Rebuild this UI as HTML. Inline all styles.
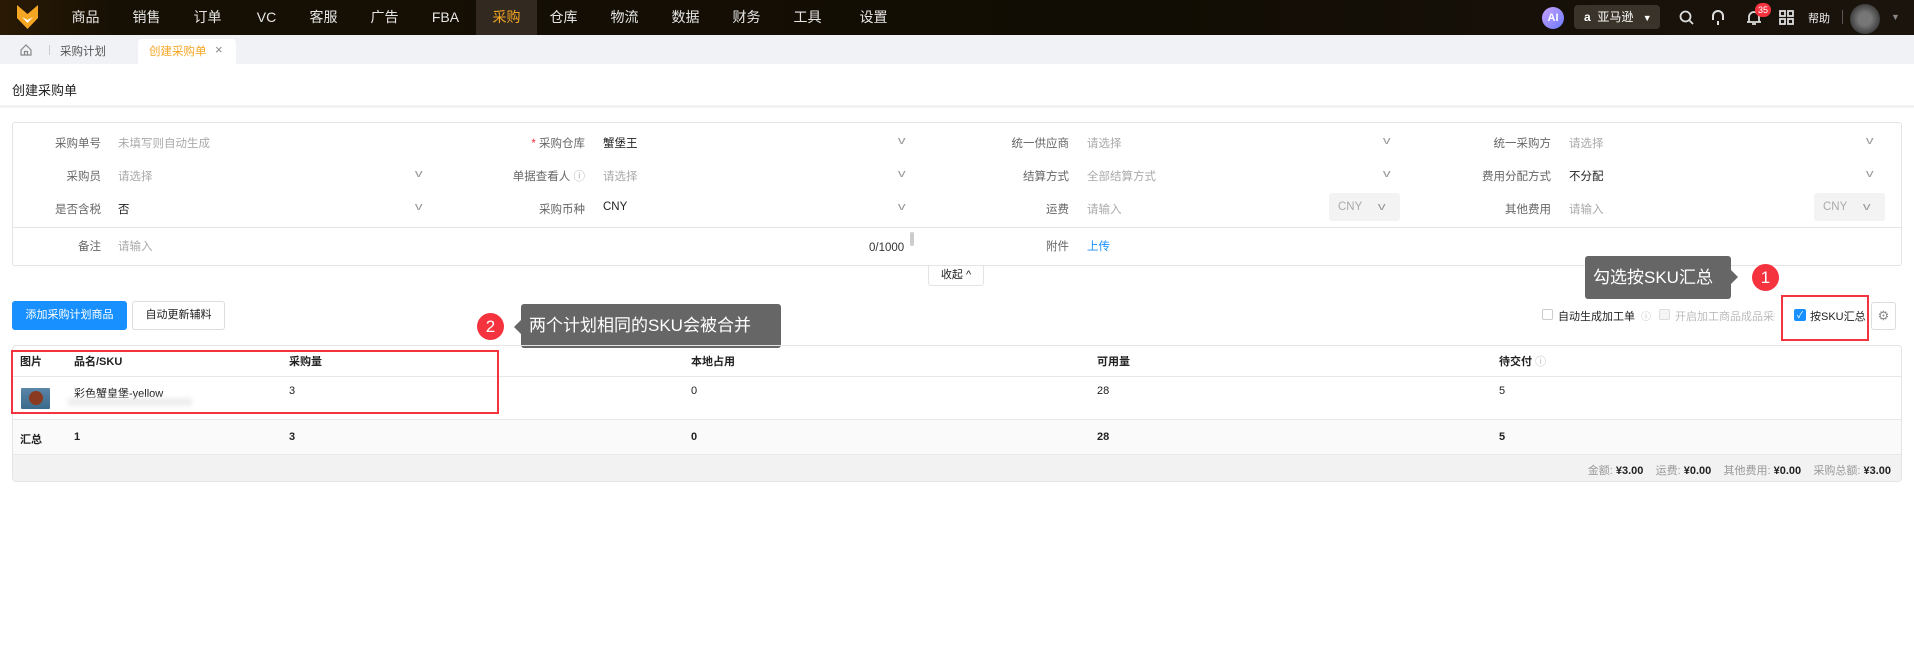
<!DOCTYPE html>
<html><head><meta charset="utf-8"><style>
*{margin:0;padding:0;box-sizing:border-box}
body{width:1914px;height:645px;background:#fff;font-family:"Liberation Sans","Noto Sans CJK SC",sans-serif;font-size:11.5px;color:#222;position:relative;overflow:hidden}
.a{position:absolute;white-space:nowrap}
.nav{position:absolute;left:0;top:0;width:1914px;height:35px;background:linear-gradient(90deg,#2a1a05 0,#161004 6%,#120d04 60%,#1a140c 100%)}
.nav .m{position:absolute;top:0;height:35px;line-height:35px;color:#e6e6e6;font-size:14px;text-align:center;width:61px}
.lbl{color:#666;text-align:right}
.ph{color:#aaa}
.chev{color:#999;font-size:11px;transform:scaleX(1.4)}
.th{font-weight:bold;color:#222}
</style></head><body>
<div class="nav">
 <svg class="a" style="left:17px;top:5px" width="21" height="24" viewBox="0 0 21 24"><path d="M0 0 L10.5 9 L21 0 L21 13 L10.5 24 L0 13Z" fill="#f5a623"/><path d="M5 12 L10.5 18 L16 12 L10.5 15Z" fill="#fff"/></svg>
 <div class="m" style="left:55px">商品</div><div class="m" style="left:116px">销售</div><div class="m" style="left:177px">订单</div><div class="m" style="left:236px">VC</div><div class="m" style="left:293px">客服</div><div class="m" style="left:354px">广告</div><div class="m" style="left:415px">FBA</div>
 <div class="m" style="left:476px;background:#322a20;color:#f5a623">采购</div>
 <div class="m" style="left:533px">仓库</div><div class="m" style="left:594px">物流</div><div class="m" style="left:655px">数据</div><div class="m" style="left:716px">财务</div><div class="m" style="left:777px">工具</div><div class="m" style="left:843px">设置</div>
 <div class="a" style="left:1542px;top:7px;width:22px;height:22px;border-radius:50%;background:linear-gradient(135deg,#c9a0ff,#6b7bff);color:#fff;font-weight:bold;font-size:11px;line-height:22px;text-align:center">AI</div>
 <div class="a" style="left:1574px;top:5px;width:86px;height:24px;border-radius:4px;background:#3a332a;color:#fff;font-size:12px;line-height:24px;padding-left:10px"><b>a</b>&nbsp; 亚马逊 <span style="font-size:9px;margin-left:6px">▼</span></div>
 <svg class="a" style="left:1679px;top:10px" width="15" height="15"><circle cx="6.5" cy="6.5" r="5" stroke="#ddd" stroke-width="1.8" fill="none"/><path d="M10 10 L14 14" stroke="#ddd" stroke-width="1.8"/></svg>
 <svg class="a" style="left:1710px;top:9px" width="16" height="17"><path d="M3 11 V7 A5 5 0 0 1 13 7 V11" stroke="#ddd" stroke-width="2" fill="none"/><path d="M8 12 V16" stroke="#ddd" stroke-width="2"/></svg>
 <svg class="a" style="left:1746px;top:9px" width="16" height="17"><path d="M3 13 V8 A5 5 0 0 1 13 8 V13 Z M1 13 H15 M6 15 H10" stroke="#ddd" stroke-width="1.8" fill="none"/></svg>
 <div class="a" style="left:1755px;top:3px;width:16px;height:14px;border-radius:7px;background:#f5333f;color:#fff;font-size:9px;line-height:14px;text-align:center">35</div>
 <svg class="a" style="left:1779px;top:10px" width="15" height="15"><g stroke="#ddd" stroke-width="1.8" fill="none"><rect x="1" y="1" width="5" height="5"/><rect x="9" y="1" width="5" height="5"/><rect x="1" y="9" width="5" height="5"/><rect x="9" y="9" width="5" height="5"/></g></svg>
 <div class="a" style="left:1808px;top:10px;color:#eee;font-size:11px">帮助</div>
 <div class="a" style="left:1842px;top:10px;width:1px;height:14px;background:#555"></div>
 <div class="a" style="left:1850px;top:4px;width:30px;height:30px;border-radius:50%;background:radial-gradient(circle,#777 30%,#333 80%)"></div>
 <div class="a" style="left:1891px;top:12px;color:#888;font-size:9px">▼</div>
</div>
<div class="a" style="left:0;top:35px;width:1914px;height:29px;background:#f0f2f5"></div>
<svg class="a" style="left:20px;top:44px" width="12" height="12"><path d="M1 6 L6 1 L11 6 V11 H1Z M4.5 11 V7.5 H7.5 V11" stroke="#888" stroke-width="1.2" fill="none"/></svg>
<div class="a" style="left:49px;top:45px;width:1px;height:10px;background:#ccc"></div>
<div class="a" style="left:60px;top:43px;color:#555">采购计划</div>
<div class="a" style="left:138px;top:39px;width:98px;height:25px;background:#fff;border-radius:4px 4px 0 0"></div>
<div class="a" style="left:149px;top:43px;color:#f5a623">创建采购单</div>
<div class="a" style="left:215px;top:42px;color:#888;font-size:13px">×</div>
<div class="a" style="left:12px;top:80px;font-size:13px;color:#222">创建采购单</div>
<div class="a" style="left:0;top:105px;width:1914px;height:3px;background:#f2f2f2"></div>
<!-- form -->
<div class="a" style="left:12px;top:122px;width:1890px;height:144px;border:1px solid #e4e4e4;border-radius:3px"></div>
<div class="a" style="left:13px;top:227px;width:1888px;height:1px;background:#e4e4e4"></div>
<div class="a lbl" style="right:1813px;top:135px">采购单号</div><div class="a ph" style="left:118px;top:135px">未填写则自动生成</div>
<div class="a lbl" style="right:1329px;top:135px"><span style="color:#f5333f">* </span>采购仓库</div><div class="a" style="left:603px;top:135px">蟹堡王</div><div class="a chev" style="left:899px;top:135px">v</div>
<div class="a lbl" style="right:845px;top:135px">统一供应商</div><div class="a ph" style="left:1087px;top:135px">请选择</div><div class="a chev" style="left:1384px;top:135px">v</div>
<div class="a lbl" style="right:363px;top:135px">统一采购方</div><div class="a ph" style="left:1569px;top:135px">请选择</div><div class="a chev" style="left:1867px;top:135px">v</div>

<div class="a lbl" style="right:1813px;top:168px">采购员</div><div class="a ph" style="left:118px;top:168px">请选择</div><div class="a chev" style="left:416px;top:168px">v</div>
<div class="a lbl" style="right:1329px;top:168px">单据查看人 <span style="color:#aaa">ⓘ</span></div><div class="a ph" style="left:603px;top:168px">请选择</div><div class="a chev" style="left:899px;top:168px">v</div>
<div class="a lbl" style="right:845px;top:168px">结算方式</div><div class="a ph" style="left:1087px;top:168px">全部结算方式</div><div class="a chev" style="left:1384px;top:168px">v</div>
<div class="a lbl" style="right:363px;top:168px">费用分配方式</div><div class="a" style="left:1569px;top:168px">不分配</div><div class="a chev" style="left:1867px;top:168px">v</div>

<div class="a lbl" style="right:1813px;top:201px">是否含税</div><div class="a" style="left:118px;top:201px">否</div><div class="a chev" style="left:416px;top:201px">v</div>
<div class="a lbl" style="right:1329px;top:201px">采购币种</div><div class="a" style="left:603px;top:201px">CNY</div><div class="a chev" style="left:899px;top:201px">v</div>
<div class="a lbl" style="right:845px;top:201px">运费</div><div class="a ph" style="left:1087px;top:201px">请输入</div>
<div class="a" style="left:1329px;top:193px;width:71px;height:28px;background:#f3f3f3;border-radius:3px;color:#aaa;line-height:28px;padding-left:9px">CNY <span class="chev" style="margin-left:14px;display:inline-block">v</span></div>
<div class="a lbl" style="right:363px;top:201px">其他费用</div><div class="a ph" style="left:1569px;top:201px">请输入</div>
<div class="a" style="left:1814px;top:193px;width:71px;height:28px;background:#f3f3f3;border-radius:3px;color:#aaa;line-height:28px;padding-left:9px">CNY <span class="chev" style="margin-left:14px;display:inline-block">v</span></div>

<div class="a lbl" style="right:1813px;top:238px">备注</div><div class="a ph" style="left:118px;top:238px">请输入</div>
<div class="a" style="left:869px;top:242px;color:#333">0/1000</div><div class="a" style="left:910px;top:232px;width:4px;height:14px;background:#ccc;border-radius:2px"></div>
<div class="a lbl" style="right:845px;top:238px">附件</div><div class="a" style="left:1087px;top:238px;color:#1890ff">上传</div>
<div class="a" style="left:928px;top:266px;width:56px;height:20px;border:1px solid #e4e4e4;border-top:none;border-radius:0 0 3px 3px;text-align:center;line-height:19px;font-size:11px">收起 ^</div>
<!-- buttons -->
<div class="a" style="left:12px;top:301px;width:115px;height:29px;background:#1890ff;border-radius:3px;color:#fff;font-size:11px;line-height:29px;text-align:center">添加采购计划商品</div>
<div class="a" style="left:132px;top:301px;width:93px;height:29px;border:1px solid #ddd;border-radius:3px;font-size:11px;line-height:27px;text-align:center">自动更新辅料</div>
<div class="a" style="left:477px;top:313px;width:27px;height:27px;border-radius:50%;background:#f5333f;color:#fff;font-size:17px;line-height:27px;text-align:center">2</div>
<div class="a" style="left:514px;top:320px;border:7px solid transparent;border-right-color:#666;border-left:none"></div>
<div class="a" style="left:521px;top:304px;width:260px;height:44px;background:#666;border-radius:3px;color:#fff;font-size:17px;line-height:44px;padding-left:8px">两个计划相同的SKU会被合并</div>
<div class="a" style="left:1585px;top:256px;width:146px;height:43px;background:#666;border-radius:3px;color:#fff;font-size:17px;line-height:43px;padding-left:8px">勾选按SKU汇总</div>
<div class="a" style="left:1731px;top:270px;border:7px solid transparent;border-left-color:#666;border-right:none"></div>
<div class="a" style="left:1752px;top:264px;width:27px;height:27px;border-radius:50%;background:#f5333f;color:#fff;font-size:17px;line-height:27px;text-align:center">1</div>
<!-- options -->
<div class="a" style="left:1542px;top:309px;width:11px;height:11px;border:1px solid #ccc;border-radius:2px"></div>
<div class="a" style="left:1558px;top:308px;font-size:11px">自动生成加工单</div>
<div class="a" style="left:1641px;top:308px;font-size:10px;color:#bbb">ⓘ</div>
<div class="a" style="left:1659px;top:309px;width:11px;height:11px;border:1px solid #ddd;background:#f5f5f5;border-radius:2px"></div>
<div class="a" style="left:1675px;top:308px;font-size:11px;color:#bbb;width:100px;overflow:hidden">开启加工商品成品采购</div>
<div class="a" style="left:1794px;top:309px;width:12px;height:12px;background:#1890ff;border-radius:2px;color:#fff;font-size:9px;line-height:12px;text-align:center">✓</div>
<div class="a" style="left:1810px;top:308px;font-size:11px">按SKU汇总</div>
<div class="a" style="left:1781px;top:295px;width:88px;height:46px;border:2px solid #f5333f"></div>
<div class="a" style="left:1871px;top:302px;width:25px;height:28px;border:1px solid #ddd;border-radius:3px;color:#888;text-align:center;line-height:26px;font-size:13px">⚙</div>
<!-- table -->
<div class="a" style="left:12px;top:345px;width:1890px;height:137px;border:1px solid #e4e4e4;border-radius:4px;overflow:hidden">
 <div class="a" style="left:0;top:30px;width:1890px;height:1px;background:#e8e8e8"></div>
 <div class="a" style="left:0;top:73px;width:1890px;height:36px;background:#fafafa;border-top:1px solid #e8e8e8;border-bottom:1px solid #e8e8e8"></div>
 <div class="a" style="left:0;top:109px;width:1890px;height:28px;background:#f2f2f2"></div>
</div>
<div class="a th" style="left:20px;top:353px;font-size:11px">图片</div><div class="a th" style="left:74px;top:353px;font-size:11px">品名/SKU</div><div class="a th" style="left:289px;top:353px;font-size:11px">采购量</div><div class="a th" style="left:691px;top:353px;font-size:11px">本地占用</div><div class="a th" style="left:1097px;top:353px;font-size:11px">可用量</div><div class="a th" style="left:1499px;top:353px;font-size:11px">待交付 <span style="color:#bbb;font-weight:normal">ⓘ</span></div>
<div class="a" style="left:21px;top:388px;width:29px;height:21px;background:linear-gradient(#5a86a8,#3b6a8a);border-radius:1px"><div style="margin:3px auto;width:14px;height:14px;border-radius:50%;background:#8a3a20"></div></div>
<div class="a" style="left:74px;top:385px;font-size:11px">彩色蟹皇堡-yellow</div>
<div class="a" style="left:68px;top:398px;width:124px;height:8px;background:#eee;filter:blur(2px)"></div>
<div class="a" style="left:289px;top:385px;font-size:11px">3</div><div class="a" style="left:691px;top:385px;font-size:11px">0</div><div class="a" style="left:1097px;top:385px;font-size:11px">28</div><div class="a" style="left:1499px;top:385px;font-size:11px">5</div>
<div class="a" style="left:11px;top:350px;width:488px;height:64px;border:2px solid #f5333f"></div>
<div class="a th" style="left:20px;top:431px;font-size:11px">汇总</div><div class="a th" style="left:74px;top:431px;font-size:11px">1</div><div class="a th" style="left:289px;top:431px;font-size:11px">3</div><div class="a th" style="left:691px;top:431px;font-size:11px">0</div><div class="a th" style="left:1097px;top:431px;font-size:11px">28</div><div class="a th" style="left:1499px;top:431px;font-size:11px">5</div>
<div class="a" style="right:23px;top:462px;font-size:11px;color:#999">金额: <b style="color:#222">¥3.00</b>&nbsp;&nbsp;&nbsp; 运费: <b style="color:#222">¥0.00</b>&nbsp;&nbsp;&nbsp; 其他费用: <b style="color:#222">¥0.00</b>&nbsp;&nbsp;&nbsp; 采购总额: <b style="color:#222">¥3.00</b></div>
</body></html>
